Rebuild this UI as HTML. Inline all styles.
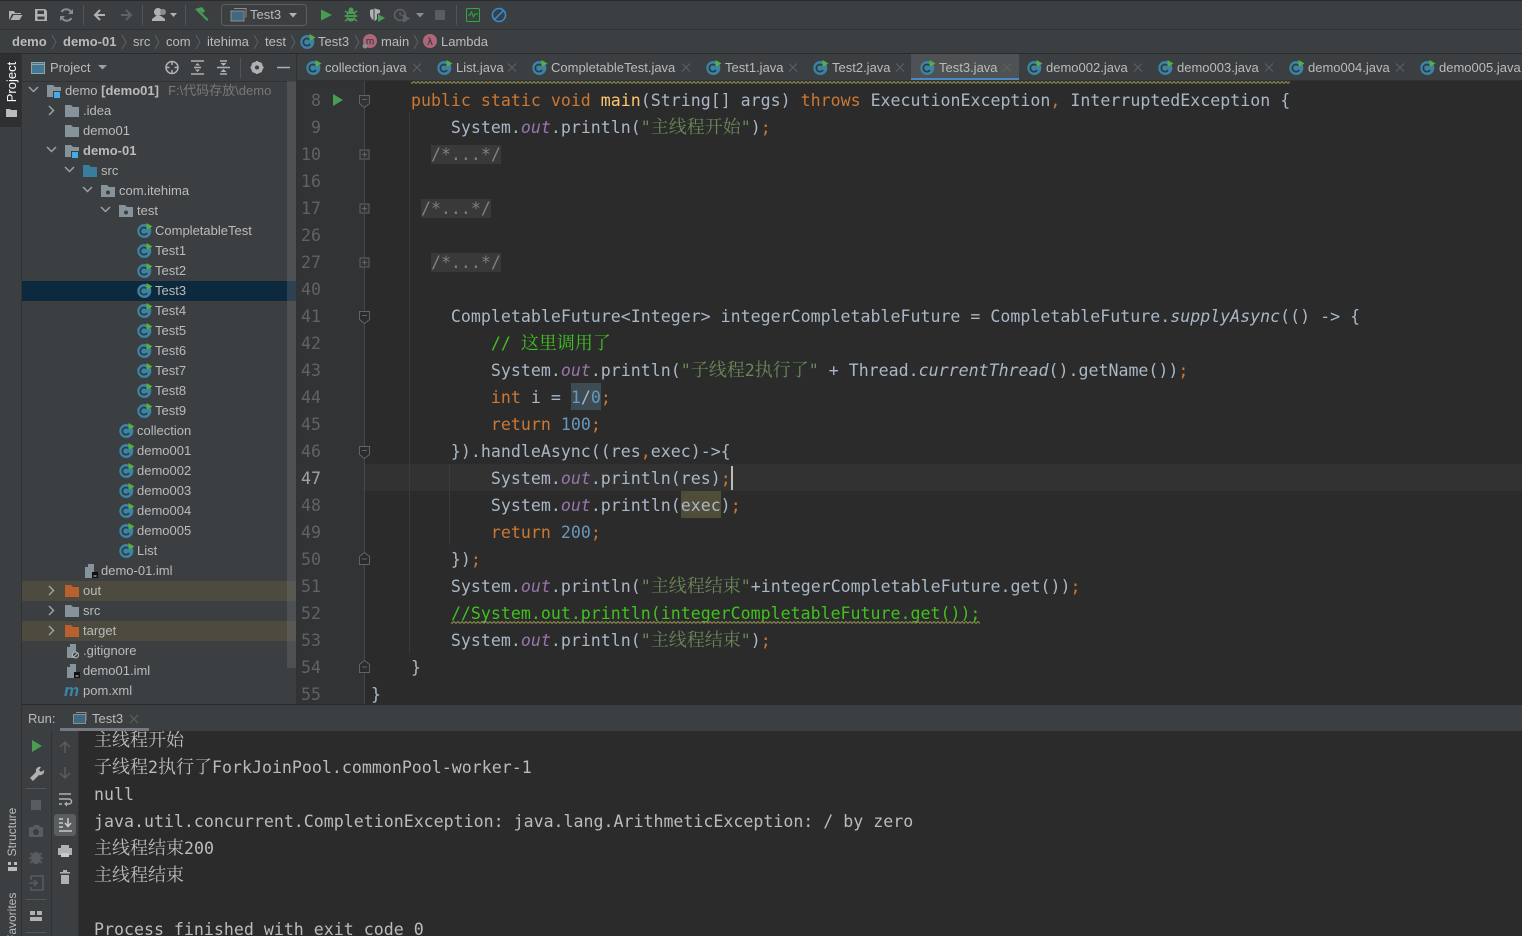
<!DOCTYPE html>
<html><head><meta charset="utf-8"><style>
html,body{margin:0;padding:0;width:1522px;height:936px;overflow:hidden;background:#3c3f41}
*{box-sizing:border-box}
#root{position:absolute;left:0;top:0;width:1522px;height:936px;overflow:hidden;background:#3c3f41}
.b{position:absolute}
.t{position:absolute;font:13px/20px "Liberation Sans","Noto Sans CJK SC",sans-serif;color:#bbbbbb;white-space:pre}
.tb{font-weight:bold}
.code,.con{position:absolute;font:16.6px/27px "DejaVu Sans Mono","Noto Serif CJK SC",monospace;color:#a9b7c6;white-space:normal;overflow:hidden}
.code div,.con div{height:27px;white-space:pre}
i.c{font-style:normal;font-family:"Noto Serif CJK SC",serif;font-size:18px;line-height:0}
.k{color:#cc7832}.s{color:#6a8759}.n{color:#6897bb}.o{color:#9876aa;font-style:italic}.m{color:#ffc66d}.g{color:#3fc21e}.e{font-style:italic}
.f{background:#393939;color:#808080}
svg{position:absolute;left:0;top:0}
</style></head><body><div id="root">
<!-- backgrounds -->
<div class="b" style="left:0;top:0;width:1522px;height:1px;background:#2b2b2b"></div>
<div class="b" style="left:0;top:29px;width:1522px;height:1px;background:#323232"></div>
<div class="b" style="left:0;top:53px;width:1522px;height:1px;background:#2b2b2b"></div>
<div class="b" style="left:0;top:54px;width:22px;height:882px;background:#3c3f41"></div>
<div class="b" style="left:0;top:54px;width:21px;height:73px;background:#2d2f30"></div>
<div class="b" style="left:21px;top:54px;width:1px;height:882px;background:#323232"></div>
<div class="b" style="left:22px;top:81px;width:274px;height:1px;background:#323232"></div>
<div class="b" style="left:296px;top:54px;width:1px;height:650px;background:#323232"></div>
<div class="b" style="left:297px;top:81px;width:1225px;height:623px;background:#2b2b2b"></div>
<div class="b" style="left:297px;top:81px;width:67px;height:623px;background:#313335"></div>
<div class="b" style="left:364px;top:464px;width:1158px;height:27px;background:#323232"></div>
<div class="b" style="left:297px;top:464px;width:67px;height:27px;background:#323436"></div>
<div class="b" style="left:911px;top:54px;width:108px;height:27px;background:#4e5254"></div>
<div class="b" style="left:911px;top:78px;width:108px;height:3px;background:#4a88c7"></div>
<div class="b" style="left:297px;top:80px;width:1225px;height:1px;background:#323232"></div>
<!-- tree row bgs -->
<div class="b" style="left:22px;top:281px;width:274px;height:20px;background:#0d293e"></div>
<div class="b" style="left:22px;top:581px;width:274px;height:20px;background:#4d4a3f"></div>
<div class="b" style="left:22px;top:621px;width:274px;height:20px;background:#4d4a3f"></div>
<div class="b" style="left:287px;top:81px;width:9px;height:587px;background:rgba(120,124,128,.3)"></div>
<!-- bottom -->
<div class="b" style="left:22px;top:704px;width:1500px;height:1px;background:#2b2b2b"></div>
<div class="b" style="left:60px;top:728px;width:89px;height:3px;background:#747a80"></div>
<div class="b" style="left:22px;top:731px;width:1500px;height:205px;background:#2b2b2b"></div>
<div class="b" style="left:22px;top:731px;width:29px;height:205px;background:#3c3f41"></div>
<div class="b" style="left:51px;top:731px;width:28px;height:205px;background:#3c3f41;border-left:1px solid #323232;border-right:1px solid #323232"></div>
<div class="b" style="left:54px;top:814px;width:22px;height:22px;background:#5a5e60;border-radius:3px"></div>
<div class="b" style="left:26px;top:788px;width:20px;height:1px;background:#555"></div>
<div class="b" style="left:26px;top:899px;width:20px;height:1px;background:#555"></div>
<div class="b" style="left:26px;top:932px;width:20px;height:1px;background:#555"></div>

<!-- editor -->
<div class="b" style="left:409px;top:113px;width:1px;height:540px;background:#3b3b3b"></div>
<div class="b" style="left:449px;top:464px;width:1px;height:81px;background:#3b3b3b"></div>
<div class="b" style="left:571px;top:383px;width:30px;height:27px;background:#3c4c52"></div>
<div class="b" style="left:681px;top:491px;width:40px;height:27px;background:#4f4c38"></div>
<div class="code" style="left:371px;top:87px;width:1151px;height:617px">
<div>    <span class="k">public static void </span><span class="m">main</span>(String[] args) <span class="k">throws</span> ExecutionException<span class="k">,</span> InterruptedException {</div>
<div>        System.<span class="o">out</span>.println(<span class="s">"<i class="c">主线程开始</i>"</span>)<span class="k">;</span></div>
<div>      <span class="f">/*...*/</span></div>
<div> </div>
<div>     <span class="f">/*...*/</span></div>
<div> </div>
<div>      <span class="f">/*...*/</span></div>
<div> </div>
<div>        CompletableFuture&lt;Integer&gt; integerCompletableFuture = CompletableFuture.<span class="e">supplyAsync</span>(() -&gt; {</div>
<div>            <span class="g">// <i class="c">这里调用了</i></span></div>
<div>            System.<span class="o">out</span>.println(<span class="s">"<i class="c">子线程</i>2<i class="c">执行了</i>"</span> + Thread.<span class="e">currentThread</span>().getName())<span class="k">;</span></div>
<div>            <span class="k">int</span> i = <span class="n">1</span>/<span class="n">0</span><span class="k">;</span></div>
<div>            <span class="k">return</span> <span class="n">100</span><span class="k">;</span></div>
<div>        }).handleAsync((res<span class="k">,</span>exec)-&gt;{</div>
<div>            System.<span class="o">out</span>.println(res)<span class="k">;</span></div>
<div>            System.<span class="o">out</span>.println(exec)<span class="k">;</span></div>
<div>            <span class="k">return</span> <span class="n">200</span><span class="k">;</span></div>
<div>        })<span class="k">;</span></div>
<div>        System.<span class="o">out</span>.println(<span class="s">"<i class="c">主线程结束</i>"</span>+integerCompletableFuture.get())<span class="k">;</span></div>
<div>        <span class="g">//System.out.println(integerCompletableFuture.get());</span></div>
<div>        System.<span class="o">out</span>.println(<span class="s">"<i class="c">主线程结束</i>"</span>)<span class="k">;</span></div>
<div>    }</div>
<div>}</div>
</div>
<div class="code" style="left:297px;top:87px;width:24px;height:617px;color:#606366;text-align:right"><div>8</div><div>9</div><div>10</div><div>16</div><div>17</div><div>26</div><div>27</div><div>40</div><div>41</div><div>42</div><div>43</div><div>44</div><div>45</div><div>46</div><div style="color:#a4a3a3">47</div><div>48</div><div>49</div><div>50</div><div>51</div><div>52</div><div>53</div><div>54</div><div>55</div></div>
<div class="b" style="left:731px;top:466px;width:2px;height:24px;background:#bbbbbb"></div>

<!-- console -->
<div class="con" style="left:94px;top:727px;width:1428px;height:209px;color:#bbbbbb;clip-path:inset(4px 0 0 0)">
<div><i class="c">主线程开始</i></div>
<div><i class="c">子线程</i>2<i class="c">执行了</i>ForkJoinPool.commonPool-worker-1</div>
<div>null</div>
<div>java.util.concurrent.CompletionException: java.lang.ArithmeticException: / by zero</div>
<div><i class="c">主线程结束</i>200</div>
<div><i class="c">主线程结束</i></div>
<div> </div>
<div>Process finished with exit code 0</div>
</div>

<!-- breadcrumbs -->
<span class="t tb" style="left:12px;top:32px">demo</span>
<span class="t tb" style="left:63px;top:32px">demo-01</span>
<span class="t" style="left:133px;top:32px">src</span>
<span class="t" style="left:166px;top:32px">com</span>
<span class="t" style="left:207px;top:32px">itehima</span>
<span class="t" style="left:265px;top:32px">test</span>
<span class="t" style="left:318px;top:32px">Test3</span>
<span class="t" style="left:381px;top:32px">main</span>
<span class="t" style="left:441px;top:32px">Lambda</span>
<span class="t" style="left:250px;top:5px;color:#bbb">Test3</span>
<!-- project header -->
<span class="t" style="left:50px;top:58px">Project</span>
<!-- tabs -->
<span class="t" style="left:325px;top:58px">collection.java</span>
<span class="t" style="left:456px;top:58px">List.java</span>
<span class="t" style="left:551px;top:58px">CompletableTest.java</span>
<span class="t" style="left:725px;top:58px">Test1.java</span>
<span class="t" style="left:832px;top:58px">Test2.java</span>
<span class="t" style="left:939px;top:58px">Test3.java</span>
<span class="t" style="left:1046px;top:58px">demo002.java</span>
<span class="t" style="left:1177px;top:58px">demo003.java</span>
<span class="t" style="left:1308px;top:58px">demo004.java</span>
<span class="t" style="left:1439px;top:58px">demo005.java</span>
<!-- tree -->
<span class="t" style="left:65px;top:81px">demo <b>[demo01]</b></span>
<span class="t" style="left:168px;top:81px;color:#787878">F:\代码存放\demo</span>
<span class="t" style="left:83px;top:101px">.idea</span>
<span class="t" style="left:83px;top:121px">demo01</span>
<span class="t tb" style="left:83px;top:141px">demo-01</span>
<span class="t" style="left:101px;top:161px">src</span>
<span class="t" style="left:119px;top:181px">com.itehima</span>
<span class="t" style="left:137px;top:201px">test</span>
<span class="t" style="left:155px;top:221px">CompletableTest</span>
<span class="t" style="left:155px;top:241px">Test1</span>
<span class="t" style="left:155px;top:261px">Test2</span>
<span class="t" style="left:155px;top:281px">Test3</span>
<span class="t" style="left:155px;top:301px">Test4</span>
<span class="t" style="left:155px;top:321px">Test5</span>
<span class="t" style="left:155px;top:341px">Test6</span>
<span class="t" style="left:155px;top:361px">Test7</span>
<span class="t" style="left:155px;top:381px">Test8</span>
<span class="t" style="left:155px;top:401px">Test9</span>
<span class="t" style="left:137px;top:421px">collection</span>
<span class="t" style="left:137px;top:441px">demo001</span>
<span class="t" style="left:137px;top:461px">demo002</span>
<span class="t" style="left:137px;top:481px">demo003</span>
<span class="t" style="left:137px;top:501px">demo004</span>
<span class="t" style="left:137px;top:521px">demo005</span>
<span class="t" style="left:137px;top:541px">List</span>
<span class="t" style="left:101px;top:561px">demo-01.iml</span>
<span class="t" style="left:83px;top:581px">out</span>
<span class="t" style="left:83px;top:601px">src</span>
<span class="t" style="left:83px;top:621px">target</span>
<span class="t" style="left:83px;top:641px">.gitignore</span>
<span class="t" style="left:83px;top:661px">demo01.iml</span>
<span class="t" style="left:83px;top:681px">pom.xml</span>
<!-- run header -->
<span class="t" style="left:28px;top:709px">Run:</span>
<span class="t" style="left:92px;top:709px">Test3</span>
<!-- vertical -->
<span class="t" style="left:-10px;top:72px;width:44px;transform:rotate(-90deg);color:#fff;text-align:center">Project</span>
<span class="t" style="left:-15px;top:822px;width:54px;transform:rotate(-90deg);text-align:center;font-size:12px">Structure</span>
<span class="t" style="left:-22px;top:898px;width:68px;transform:rotate(-90deg);text-align:left;font-size:12px">Favorites</span>

<svg width="1522" height="936" viewBox="0 0 1522 936" fill="none">
<defs>
<g id="c"><circle cx="7.3" cy="8" r="7" fill="#3b84a5"/><path d="M10 6.200A3.600 3.600 0 1 0 10 10" stroke="#2c3c45" stroke-width="1.700" fill="none"/><path d="M9.500 0L15.500 3.500L9.500 7z" fill="#58ad45"/></g>
<path id="fd" d="M0 0h6l2 2h6v10H0z"/>
<path id="ar" d="M0 0l4.500 4.500-4.500 4.500" stroke="#9da0a2" stroke-width="1.500" fill="none"/>
<path id="ad" d="M0 0l4.500 4.500 4.500-4.500" stroke="#9da0a2" stroke-width="1.500" fill="none"/>
<path id="x" d="M0 0l8 8M8 0l-8 8" stroke="#5e6163" stroke-width="1"/>
<path id="cv" d="M0 0l4 7-4 7" stroke="#5e6163" stroke-width="1" fill="none"/>
<g id="fp"><path d="M0 0h6l2 2h6v10H0z" fill="#87939a"/><circle cx="7" cy="7.500" r="2" fill="#3c3f41"/></g>
<g id="pg"><path d="M3 0h6v14H0V3z" fill="#87939a"/><path d="M0 3h3V0z" fill="#3c3f41"/></g>
<g id="pp"><rect x=".5" y=".5" width="9" height="9" fill="#313335" stroke="#606366"/><path d="M2.500 5h5M5 2.500v5" stroke="#606366"/></g>
</defs>
<!-- toolbar -->
<path d="M9 11h5l1 2h6v1H12l-3 6zM10.500 20l3-5h9l-3 5z" fill="#afb1b3"/>
<path d="M35 9h10l2 2v10H35z M37.500 10.500v3.500h6.500v-3.500z M37.500 16.500v3h7v-3z" fill="#afb1b3" fill-rule="evenodd"/>
<path d="M71 12a5.500 5.500 0 0 0-9.500 0M62 18a5.500 5.500 0 0 0 9.500 0" stroke="#8b8e90" stroke-width="2"/><path d="M73 9v5h-5zM60 21v-5h5z" fill="#8b8e90"/>
<path d="M83.500 5v20M142.500 5v20M185.500 5v20M456.500 5v20" stroke="#525557"/>
<path d="M105 15H95M100 10l-5 5 5 5" stroke="#afb1b3" stroke-width="2"/>
<path d="M121 15h10M126 10l5 5-5 5" stroke="#5f6265" stroke-width="2"/>
<circle cx="158" cy="12" r="4" fill="#afb1b3"/><path d="M152 21v-2l4-3h5l4 3v2z" fill="#afb1b3"/><circle cx="163" cy="12" r="3" fill="#8b8e90"/>
<path d="M170 13h7l-3.500 4z" fill="#afb1b3"/>
<path d="M195 9l7-2 3 4-2 2-3-2-1.500 1.500z" fill="#499c54"/><path d="M198.500 9.500l10 10-1.500 1.500-10-10z" fill="#499c54"/>
<rect x="221.500" y="4.500" width="85" height="21" rx="3" stroke="#5e6060"/>
<rect x="231" y="11" width="13" height="10" fill="#3e6a80" stroke="#8b8e90"/><path d="M234 8.500h12v9" stroke="#8b8e90"/>
<path d="M289 13h8l-4 4.500z" fill="#afb1b3"/>
<path d="M321 9.500l11 5.500-11 5.500z" fill="#499c54"/>
<ellipse cx="351" cy="16" rx="4.500" ry="5.500" fill="#499c54"/><circle cx="351" cy="10" r="2.500" fill="#499c54"/><path d="M345 11l3 2M357 11l-3 2M344.500 16h13M345 21l3-2M357 21l-3-2" stroke="#499c54" stroke-width="1.500"/><path d="M348 14.500h6M348 17.500h6" stroke="#3c3f41"/>
<path d="M370 10l5-1.500 5 1.500v3l-3 1v5l-2 2c-3-1-5-4-5-7z" fill="#afb1b3"/><path d="M374 9v12" stroke="#3c3f41"/><path d="M378 14l7 4-7 4z" fill="#499c54"/>
<circle cx="400" cy="15" r="5.500" stroke="#5f6265" stroke-width="1.500"/><path d="M400 12v3h3" stroke="#5f6265"/><path d="M403 14l7 4.500-7 4.500z" fill="#5f6265"/>
<path d="M416 13h8l-4 4.500z" fill="#8b8e90"/>
<rect x="435" y="10" width="10" height="10" fill="#5a5d5f"/>
<rect x="466.500" y="8.500" width="13" height="13" stroke="#2bab3a" rx="1"/><path d="M468 15h2l1.500-3 2 5 1.500-3h3" stroke="#2bab3a"/>
<circle cx="499" cy="15" r="6.500" stroke="#2f8fdc" stroke-width="1.500"/><path d="M494.500 19.500l9-9" stroke="#2f8fdc" stroke-width="1.500"/>
<!-- breadcrumb chevrons -->
<use href="#cv" x="52" y="35"/><use href="#cv" x="122" y="35"/><use href="#cv" x="155" y="35"/><use href="#cv" x="196" y="35"/><use href="#cv" x="254" y="35"/><use href="#cv" x="291" y="35"/><use href="#cv" x="355" y="35"/><use href="#cv" x="414" y="35"/>
<use href="#c" x="300" y="34"/>
<circle cx="370" cy="41" r="7" fill="#b0667a"/><text x="370" y="44.500" font-family="Liberation Sans" font-size="10" fill="#2f2f2f" text-anchor="middle">m</text>
<circle cx="365" cy="46" r="2.500" fill="#8b8e90"/>
<circle cx="430" cy="41" r="7" fill="#b0667a"/><text x="430" y="45" font-family="DejaVu Sans" font-size="10" fill="#2f2f2f" text-anchor="middle">λ</text>
<!-- project header -->
<rect x="31.500" y="62.500" width="13" height="11" fill="#3e7a96" stroke="#9da0a2"/><path d="M31 64.500h14" stroke="#9da0a2"/>
<path d="M98 65h9l-4.500 4.500z" fill="#9da0a2"/>
<circle cx="172" cy="67.500" r="6" stroke="#afb1b3" stroke-width="1.500"/><path d="M172 61v4M172 70v4M165.500 67.500h4M174.500 67.500h4" stroke="#afb1b3" stroke-width="1.500"/>
<path d="M191 61h13M191 74h13M194 67.500h7" stroke="#afb1b3" stroke-width="1.500"/><path d="M197.500 63l2.500 2.500h-5zM197.500 72l2.500-2.500h-5z" fill="#afb1b3"/>
<path d="M217 67.500h13M220 61h7M220 74h7" stroke="#afb1b3" stroke-width="1.500"/><path d="M223.500 66l3-3h-6zM223.500 69l3 3h-6z" fill="#afb1b3"/>
<path d="M240.500 58v20" stroke="#525557"/>
<circle cx="257" cy="67.500" r="4.500" stroke="#afb1b3" stroke-width="3"/><path d="M257 61v13M250.500 67.500h13M252.500 63l9 9M261.500 63l-9 9" stroke="#afb1b3" stroke-width="2"/><circle cx="257" cy="67.500" r="2" fill="#3c3f41"/>
<path d="M277 67.500h13" stroke="#afb1b3" stroke-width="1.500"/>
<!-- tab icons -->
<use href="#c" x="306" y="60"/><use href="#c" x="437" y="60"/><use href="#c" x="532" y="60"/><use href="#c" x="706" y="60"/><use href="#c" x="813" y="60"/><use href="#c" x="920" y="60"/><use href="#c" x="1027" y="60"/><use href="#c" x="1158" y="60"/><use href="#c" x="1289" y="60"/><use href="#c" x="1420" y="60"/>
<use href="#x" x="413" y="63.500"/><use href="#x" x="508" y="63.500"/><use href="#x" x="682" y="63.500"/><use href="#x" x="789" y="63.500"/><use href="#x" x="896" y="63.500"/><use href="#x" x="1003" y="63.500"/><use href="#x" x="1134" y="63.500"/><use href="#x" x="1265" y="63.500"/><use href="#x" x="1396" y="63.500"/>
<!-- tree icons -->
<use href="#ad" x="29" y="87"/>
<use href="#fd" x="47" y="85" fill="#87939a"/><rect x="53" y="91" width="8" height="8" fill="#3c3f41"/><rect x="54" y="92" width="6" height="6" fill="#3daee9"/>
<use href="#ar" x="49" y="106"/><use href="#fd" x="65" y="105" fill="#87939a"/>
<use href="#fd" x="65" y="125" fill="#87939a"/>
<use href="#ad" x="47" y="147"/><use href="#fd" x="65" y="145" fill="#87939a"/><rect x="71" y="151" width="8" height="8" fill="#3c3f41"/><rect x="72" y="152" width="6" height="6" fill="#3daee9"/>
<use href="#ad" x="65" y="167"/><use href="#fd" x="83" y="165" fill="#3a7c9c"/>
<use href="#ad" x="83" y="187"/><use href="#fp" x="101" y="185"/>
<use href="#ad" x="101" y="207"/><use href="#fp" x="119" y="205"/>
<use href="#c" x="137" y="223"/><use href="#c" x="137" y="243"/><use href="#c" x="137" y="263"/><use href="#c" x="137" y="283"/><use href="#c" x="137" y="303"/><use href="#c" x="137" y="323"/><use href="#c" x="137" y="343"/><use href="#c" x="137" y="363"/><use href="#c" x="137" y="383"/><use href="#c" x="137" y="403"/>
<use href="#c" x="119" y="423"/><use href="#c" x="119" y="443"/><use href="#c" x="119" y="463"/><use href="#c" x="119" y="483"/><use href="#c" x="119" y="503"/><use href="#c" x="119" y="523"/><use href="#c" x="119" y="543"/>
<use href="#pg" x="85" y="564"/><rect x="92" y="572" width="6" height="6" fill="#111"/><path d="M93.500 576h3" stroke="#ddd"/>
<use href="#ar" x="49" y="586"/><use href="#fd" x="65" y="585" fill="#b8602e"/>
<use href="#ar" x="49" y="606"/><use href="#fd" x="65" y="605" fill="#87939a"/>
<use href="#ar" x="49" y="626"/><use href="#fd" x="65" y="625" fill="#b8602e"/>
<use href="#pg" x="67" y="644"/><circle cx="75.500" cy="655" r="3" stroke="#bbb" fill="#3c3f41"/><path d="M73.500 657l4-4" stroke="#bbb"/>
<use href="#pg" x="67" y="664"/><rect x="74" y="672" width="6" height="6" fill="#111"/><path d="M75.500 676h3" stroke="#ddd"/>
<text x="64" y="696" font-family="Liberation Sans" font-size="17" font-weight="bold" font-style="italic" fill="#3b84a5">m</text>
<!-- gutter -->
<path d="M364.500 81v623" stroke="#45474a"/>
<path d="M333 94l10 6-10 6z" fill="#499c54"/>
<g stroke="#606366" fill="#313335"><path d="M359.500 95.500h10v8l-5 4-5-4z"/><path d="M362 99.500h5" fill="none"/></g>
<use href="#pp" x="359.500" y="149.500"/><use href="#pp" x="359.500" y="203.500"/><use href="#pp" x="359.500" y="257.500"/>
<g stroke="#606366" fill="#2b2b2b"><path d="M359.500 311.500h10v8l-5 4-5-4z"/><path d="M362 315.500h5" fill="none"/>
<path d="M359.500 446.500h10v8l-5 4-5-4z"/><path d="M362 450.500h5" fill="none"/>
<path d="M359.500 564.500h10v-8l-5-4-5 4z"/><path d="M362 559h5" fill="none"/>
<path d="M359.500 672.500h10v-8l-5-4-5 4z"/><path d="M362 667h5" fill="none"/></g>
<!-- wavy -->
<defs><pattern id="w" width="4" height="3" patternUnits="userSpaceOnUse"><path d="M0 2.500L2 .5L4 2.500" stroke="#8f8f50" stroke-width="1" fill="none"/></pattern></defs>
<rect x="411" y="81" width="879" height="3" fill="url(#w)"/>
<rect x="451" y="621" width="529" height="3" fill="url(#w)"/>
<!-- left strip -->
<path d="M6 109h4l1 1h6v7H6z" fill="#bbb"/>
<path d="M8 862h3v3H8zM14 862h3v3h-3zM8 867h9v4H8z" fill="#bbb"/>
<!-- run header -->
<rect x="73.500" y="714.500" width="12" height="9" fill="#3e6a80" stroke="#8b8e90"/><path d="M76 712.500h10v8" stroke="#8b8e90"/>
<use href="#x" x="130" y="715" />
<!-- run col1 -->
<path d="M32 740l10 6-10 6z" fill="#499c54"/>
<path d="M30 778l6-6a4 4 0 0 1 5-5l-2 3 2 2 3-2a4 4 0 0 1-5 5l-6 6z" fill="#afb1b3"/>
<rect x="31" y="800" width="10" height="10" fill="#5a5d5f"/>
<path d="M29 827h4l1-2h5l1 2h3v10H29z" fill="#5a5d5f"/><circle cx="36" cy="832" r="3" fill="#3c3f41"/>
<ellipse cx="36" cy="858" rx="5" ry="6" fill="#5a5d5f"/><path d="M30 853l12 10M42 853l-12 10M29 858h14" stroke="#5a5d5f" stroke-width="1.500"/>
<path d="M31 876h12v14H31v-3M31 880v-4M29 883h8M34 880l3 3-3 3" stroke="#5a5d5f" stroke-width="1.500"/>
<path d="M30 911h5v4h-5zM37 911h5v4h-5zM30 917h12v4H30z" fill="#afb1b3"/>
<!-- run col2 -->
<path d="M65 753v-11M60 747l5-5 5 5" stroke="#5a5d5f" stroke-width="1.500"/>
<path d="M65 767v11M60 773l5 5 5-5" stroke="#5a5d5f" stroke-width="1.500"/>
<path d="M59 794h12M59 799h10a2.500 2.500 0 0 1 0 5h-4M59 804h3" stroke="#afb1b3" stroke-width="1.500"/><path d="M67 801.500v5l-3-2.500z" fill="#afb1b3"/>
<path d="M59 819h4M59 823h4M59 827h4M59 831h13M68 818v8M65 823l3 3.500 3-3.500" stroke="#c8cacb" stroke-width="1.500"/>
<path d="M61 845h8v3h3v7h-3v-2h-8v2h-3v-7h3z" fill="#afb1b3"/><rect x="61" y="853" width="8" height="4" fill="#c8cacb"/>
<path d="M60 872h10v1.500H60zM63 870h4v2h-4zM61 875h8v9h-8z" fill="#afb1b3"/>
</svg>
</div></body></html>
